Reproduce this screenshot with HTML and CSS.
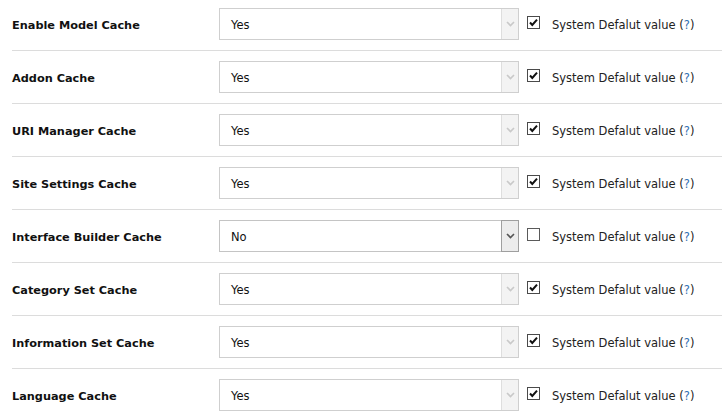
FILE: index.html
```html
<!DOCTYPE html>
<html>
<head>
<meta charset="utf-8">
<link rel="stylesheet" href="styles.css">
</head>
<body>
<div class="settings">
  <div class="row">
    <div class="label">Enable Model Cache</div>
    <div class="select disabled"><span class="value">Yes</span><span class="arrow"><svg width="9" height="6" viewBox="0 0 9 6"><polyline points="1,1 4.5,4.5 8,1" fill="none" stroke="currentColor" stroke-width="1.6"/></svg></span></div>
    <span class="check checked"><svg width="13" height="13" viewBox="0 0 13 13"><rect x="0.5" y="0.5" width="12" height="12" fill="#fff" stroke="#4a4a4a"/><polyline points="3,6.5 5.3,9 10,3.6" fill="none" stroke="#111" stroke-width="2"/></svg></span>
    <span class="note">System Defalut value (<a class="help">?</a>)</span>
  </div>
  <div class="row">
    <div class="label">Addon Cache</div>
    <div class="select disabled"><span class="value">Yes</span><span class="arrow"><svg width="9" height="6" viewBox="0 0 9 6"><polyline points="1,1 4.5,4.5 8,1" fill="none" stroke="currentColor" stroke-width="1.6"/></svg></span></div>
    <span class="check checked"><svg width="13" height="13" viewBox="0 0 13 13"><rect x="0.5" y="0.5" width="12" height="12" fill="#fff" stroke="#4a4a4a"/><polyline points="3,6.5 5.3,9 10,3.6" fill="none" stroke="#111" stroke-width="2"/></svg></span>
    <span class="note">System Defalut value (<a class="help">?</a>)</span>
  </div>
  <div class="row">
    <div class="label">URI Manager Cache</div>
    <div class="select disabled"><span class="value">Yes</span><span class="arrow"><svg width="9" height="6" viewBox="0 0 9 6"><polyline points="1,1 4.5,4.5 8,1" fill="none" stroke="currentColor" stroke-width="1.6"/></svg></span></div>
    <span class="check checked"><svg width="13" height="13" viewBox="0 0 13 13"><rect x="0.5" y="0.5" width="12" height="12" fill="#fff" stroke="#4a4a4a"/><polyline points="3,6.5 5.3,9 10,3.6" fill="none" stroke="#111" stroke-width="2"/></svg></span>
    <span class="note">System Defalut value (<a class="help">?</a>)</span>
  </div>
  <div class="row">
    <div class="label">Site Settings Cache</div>
    <div class="select disabled"><span class="value">Yes</span><span class="arrow"><svg width="9" height="6" viewBox="0 0 9 6"><polyline points="1,1 4.5,4.5 8,1" fill="none" stroke="currentColor" stroke-width="1.6"/></svg></span></div>
    <span class="check checked"><svg width="13" height="13" viewBox="0 0 13 13"><rect x="0.5" y="0.5" width="12" height="12" fill="#fff" stroke="#4a4a4a"/><polyline points="3,6.5 5.3,9 10,3.6" fill="none" stroke="#111" stroke-width="2"/></svg></span>
    <span class="note">System Defalut value (<a class="help">?</a>)</span>
  </div>
  <div class="row">
    <div class="label">Interface Builder Cache</div>
    <div class="select enabled"><span class="value">No</span><span class="arrow"><svg width="9" height="6" viewBox="0 0 9 6"><polyline points="1,1 4.5,4.5 8,1" fill="none" stroke="currentColor" stroke-width="1.6"/></svg></span></div>
    <span class="check"><svg width="13" height="13" viewBox="0 0 13 13"><rect x="0.5" y="0.5" width="12" height="12" fill="#fff" stroke="#5a5a5a"/></svg></span>
    <span class="note">System Defalut value (<a class="help">?</a>)</span>
  </div>
  <div class="row">
    <div class="label">Category Set Cache</div>
    <div class="select disabled"><span class="value">Yes</span><span class="arrow"><svg width="9" height="6" viewBox="0 0 9 6"><polyline points="1,1 4.5,4.5 8,1" fill="none" stroke="currentColor" stroke-width="1.6"/></svg></span></div>
    <span class="check checked"><svg width="13" height="13" viewBox="0 0 13 13"><rect x="0.5" y="0.5" width="12" height="12" fill="#fff" stroke="#4a4a4a"/><polyline points="3,6.5 5.3,9 10,3.6" fill="none" stroke="#111" stroke-width="2"/></svg></span>
    <span class="note">System Defalut value (<a class="help">?</a>)</span>
  </div>
  <div class="row">
    <div class="label">Information Set Cache</div>
    <div class="select disabled"><span class="value">Yes</span><span class="arrow"><svg width="9" height="6" viewBox="0 0 9 6"><polyline points="1,1 4.5,4.5 8,1" fill="none" stroke="currentColor" stroke-width="1.6"/></svg></span></div>
    <span class="check checked"><svg width="13" height="13" viewBox="0 0 13 13"><rect x="0.5" y="0.5" width="12" height="12" fill="#fff" stroke="#4a4a4a"/><polyline points="3,6.5 5.3,9 10,3.6" fill="none" stroke="#111" stroke-width="2"/></svg></span>
    <span class="note">System Defalut value (<a class="help">?</a>)</span>
  </div>
  <div class="row">
    <div class="label">Language Cache</div>
    <div class="select disabled"><span class="value">Yes</span><span class="arrow"><svg width="9" height="6" viewBox="0 0 9 6"><polyline points="1,1 4.5,4.5 8,1" fill="none" stroke="currentColor" stroke-width="1.6"/></svg></span></div>
    <span class="check checked"><svg width="13" height="13" viewBox="0 0 13 13"><rect x="0.5" y="0.5" width="12" height="12" fill="#fff" stroke="#4a4a4a"/><polyline points="3,6.5 5.3,9 10,3.6" fill="none" stroke="#111" stroke-width="2"/></svg></span>
    <span class="note">System Defalut value (<a class="help">?</a>)</span>
  </div>
</div>
</body>
</html>
```
FILE: styles.css
```css
html, body {
  margin: 0;
  padding: 0;
  background: #fff;
}
body {
  font-family: "DejaVu Sans", Verdana, sans-serif;
  font-size: 11.5px;
  color: #222;
  overflow: hidden;
}
.settings {
  padding-left: 12px;
}
.row {
  display: flex;
  align-items: center;
  padding: 10px 0;
  border-bottom: 1px solid #dcdcdc;
}
.row:first-child {
  padding-top: 8px;
}
.label {
  width: 207px;
  flex: none;
  font-weight: bold;
  font-size: 11.3px;
  color: #111;
  padding-top: 2px;
}
.select {
  width: 300px;
  height: 32px;
  box-sizing: border-box;
  flex: none;
  display: flex;
  border: 1px solid #cfcfcf;
  background: #fff;
}
.select .value {
  flex: 1;
  display: flex;
  align-items: center;
  padding-left: 11px;
  padding-top: 2px;
  color: #111;
}
.select .arrow {
  width: 17px;
  box-sizing: border-box;
  display: flex;
  align-items: center;
  justify-content: center;
  background: #f3f3f3;
  border-left: 1px solid #dedede;
}
.select.disabled .arrow {
  color: #c9c9c9;
}
.select.enabled {
  border-color: #c4c4c4;
}
.select.enabled .arrow {
  color: #555;
  background: #ececec;
  border: 1px solid #9f9f9f;
  margin: -1px -1px -1px 0;
  width: 18px;
}
.check {
  flex: none;
  width: 13px;
  height: 13px;
  margin-left: 8px;
  margin-bottom: 3px;
  display: flex;
}
.note {
  margin-left: 12px;
  padding-top: 2px;
  color: #222;
}
.help {
  color: #2f6fb3;
}
```
